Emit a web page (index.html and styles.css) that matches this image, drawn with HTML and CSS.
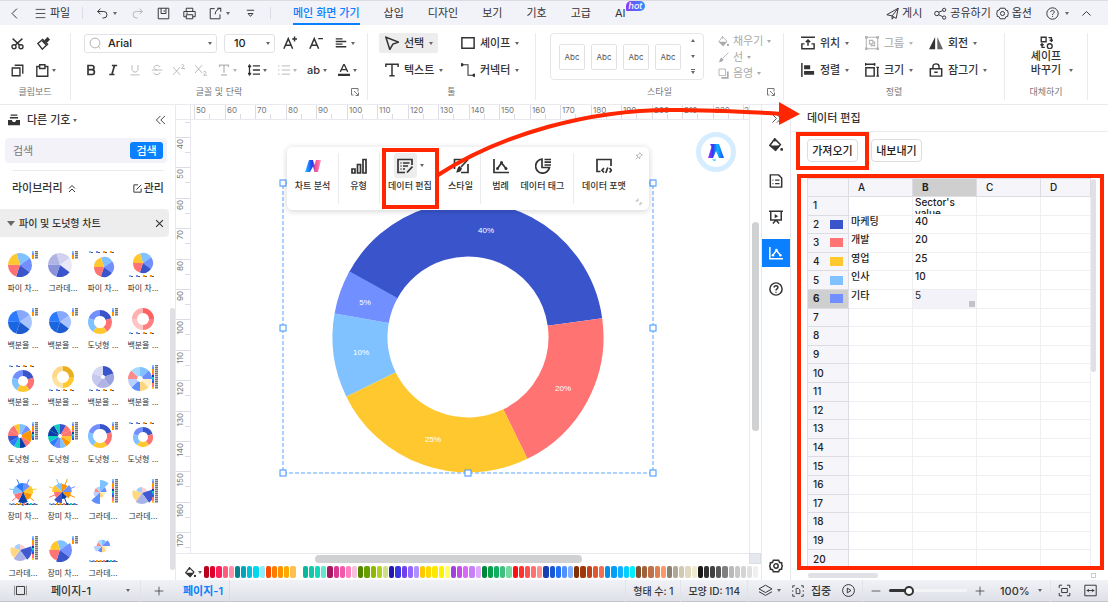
FILE: index.html
```html
<!DOCTYPE html>
<html lang="ko">
<head>
<meta charset="utf-8">
<title>데이터 편집</title>
<link rel="stylesheet" href="styles.css">
</head>
<body>
<svg class="sprite" aria-hidden="true">
  <symbol id="back" viewBox="0 0 16 16"><path d="M11 2 5 8l6 6"/></symbol>
  <symbol id="menu" viewBox="0 0 16 16"><path d="M1 2h14M1 8h14M1 14h14"/></symbol>
  <symbol id="undo" viewBox="0 0 16 16"><path d="M5.500 2 2 5.500 5.500 9M2 5.500h7.500a4 4 0 0 1 0 8H8"/></symbol>
  <symbol id="redo" viewBox="0 0 16 16"><path d="M10.500 2 14 5.500 10.500 9M14 5.500H6.500a4 4 0 0 0 0 8H8"/></symbol>
  <symbol id="save" viewBox="0 0 16 16"><path d="M1.500 1.500h13v13h-13zM5 1.500V8h6V1.500M8.800 4v2"/></symbol>
  <symbol id="print" viewBox="0 0 16 16"><path d="M4 5V1.500h8V5M4 12H1V5.500h14V12H12M4 9.500h8v5H4zM4 7.500h2"/></symbol>
  <symbol id="export" viewBox="0 0 16 16"><path d="M7 2H1.500v12.500h12V9M10 1.500h4.500V6M14.500 1.500c-4 1-6.500 3-7 7.500"/></symbol>
  <symbol id="more" viewBox="0 0 16 16"><path d="M3.500 4h9M5 8l3 3.500L11 8z"/></symbol>
  <symbol id="send" viewBox="0 0 16 16"><path d="M1 9.500 15 1.500 12.500 14 7.500 11zM7.500 11v4l2-2.700M7.500 11 15 1.500"/></symbol>
  <symbol id="share" viewBox="0 0 16 16"><circle cx="3.500" cy="8" r="2.700"/><circle cx="12.500" cy="3.500" r="2"/><circle cx="12.500" cy="13" r="2"/><path d="M5.800 6.500 10.500 4.500M5.800 9.500l5 2.500"/></symbol>
  <symbol id="gear" viewBox="0 0 16 16"><path d="M5 1.500h6l1 2.300 2.500.7v1.500l.7 2-.7 2v1.500l-2.500.7-1 2.300H5l-1-2.300-2.500-.7V10l-.7-2 .7-2V4.500L4 3.800z"/><circle cx="8" cy="8" r="2.500"/></symbol>
  <symbol id="help" viewBox="0 0 16 16"><circle cx="8" cy="8" r="7"/><path d="M5.800 6.300C5.800 3.500 10.200 3.600 10.200 6.200 10.200 7.800 8 7.800 8 9.700M8 11v1.200"/></symbol>
  <symbol id="up" viewBox="0 0 16 16"><path d="m3 10.500 5-5 5 5"/></symbol>
  <symbol id="cut" viewBox="0 0 16 16"><circle cx="3.700" cy="12" r="2.500"/><circle cx="12.300" cy="12" r="2.500"/><path d="M5.300 10 14 2M10.700 10 2 2"/></symbol>
  <symbol id="brush" viewBox="0 0 16 16"><path class="f" d="m9 4 4-4 3 3-4 4.500z"/><path d="m7 3 6 6-6.500 6L1 8zM6.500 5l5 5"/></symbol>
  <symbol id="copy" viewBox="0 0 16 16"><path d="M1.500 5h9.500v9.500H1.500zM4.500 1.500h10V12"/></symbol>
  <symbol id="paste" viewBox="0 0 16 16"><path d="M4 3H1v12h13.500V3H11M4.500 1h6.500v4.500H4.500z"/></symbol>
  <symbol id="lens" viewBox="0 0 16 16"><circle cx="8" cy="8" r="6.500"/><path d="m12 12 3 3.500"/></symbol>
  <symbol id="bigger" viewBox="0 0 16 16"><path d="M1 14.500 6 3l5 11.500M2.800 10.500h6.600M10.500 3.500h5.500M13.200.7v5.600"/></symbol>
  <symbol id="smaller" viewBox="0 0 16 16"><path d="M1 14.500 6 3l5 11.500M2.800 10.500h6.600M10.500 3H16"/></symbol>
  <symbol id="align" viewBox="0 0 16 16"><path d="M1 2.500h9M1 6h14M1 9.500h9M1 13h14"/></symbol>
  <symbol id="bold" viewBox="0 0 16 16"><path d="M4 2h5c4 0 4 5.500 0 5.500H4zM4 7.500h5.500c4 0 4 6.500 0 6.500H4z"/></symbol>
  <symbol id="italic" viewBox="0 0 16 16"><path d="M6.500 2h7M3 14h7M10 2 6.500 14"/></symbol>
  <symbol id="under" viewBox="0 0 16 16"><path d="M4 1.500V7c0 5 8 5 8 0V1.500M2 14.500h12"/></symbol>
  <symbol id="strike" viewBox="0 0 16 16"><path d="M12 4c-1-3-8-3-8 .5 0 2 2 3 4 3.500M1 8h14M12 11c0 4-7.500 4-8.500.5"/></symbol>
  <symbol id="sup" viewBox="0 0 16 16"><path d="m0 4 9.500 10.500M9.500 4 0 14.500M11.500 2c0-2 3.500-1.500 3 .5L11.500 6H16"/></symbol>
  <symbol id="sub" viewBox="0 0 16 16"><path d="m0 1.500 9.500 10.500M9.500 1.500 0 12M11.500 11c0-2 3.500-1.500 3 .5l-3 3.500H16"/></symbol>
  <symbol id="tee" viewBox="0 0 16 16"><path d="M2 4V1.500h12V4M8 1.500v10M4 14.500h8"/></symbol>
  <symbol id="spacing" viewBox="0 0 16 16"><path d="M2 2v12M0 4l2-2.500L4 4M0 12l2 2.500L4 12M6.500 2.500H17M6.500 8H17M6.500 13.500H17"/></symbol>
  <symbol id="list" viewBox="0 0 16 16"><path d="M0 2.500h2M5 2.500h11M0 8h2M5 8h11M0 13.500h2M5 13.500h11"/></symbol>
  <symbol id="fontcolor" viewBox="0 0 16 16"><path d="M3 10.500 8 0l5 10.500M4.800 7.500h6.400"/><path class="f" d="M0 13h16v3.500H0z"/></symbol>
  <symbol id="launch" viewBox="0 0 16 16"><path d="M5 14H1V1h13v6M6 6l8 8M15 9v6H9"/></symbol>
  <symbol id="pointer" viewBox="0 0 16 16"><path d="m1 1.500 14.500 5.500-6.500 2.200L5.500 15.500z"/></symbol>
  <symbol id="text" viewBox="0 0 16 16"><path d="M1 4.500V1.500h14v3M8 1.500v13M5 14.500h6"/></symbol>
  <symbol id="rect" viewBox="0 0 16 16"><path d="M1 2h14v12H1z"/></symbol>
  <symbol id="connector" viewBox="0 0 16 16"><path d="M1 2h7v12h6"/><circle class="f" cx="1" cy="2" r="1.900"/><circle class="f" cx="15" cy="14" r="1.900"/></symbol>
  <symbol id="bucket" viewBox="0 0 16 16"><path d="m6.500 1 6.500 6.500-5.500 6.500L1 8.500zM6.500 0v4"/><path class="f" d="M1.500 8.500h11.500l-5.500 6.500z"/><circle class="f" cx="14.500" cy="13" r="1.700"/></symbol>
  <symbol id="pen" viewBox="0 0 16 16"><path d="M15 1 7 9"/><path class="f" d="m5 8 3 3c-1 3-4 4-7 4 2-2 1-5 4-7z"/></symbol>
  <symbol id="shadow" viewBox="0 0 16 16"><path class="f" d="M5 13h8V5h2.500v10.500H5z"/><path d="M1.500 1.500H11V11H1.500z"/></symbol>
  <symbol id="position" viewBox="0 0 16 16"><path d="M0 1.500h16M8 11V5M5.500 7 8 4.500 10.500 7M4 9H1v5.500h14V9H12"/></symbol>
  <symbol id="alignleft" viewBox="0 0 16 16"><path d="M1 0v16"/><path class="f" d="M3.500 2.500h7v4.500h-7zM3.500 9H15v4.500H3.500z"/></symbol>
  <symbol id="group" viewBox="0 0 16 16"><path d="M1.500 1.500h13v13h-13z"/><path d="M5 5h4v4H5zM7 9v2h4V7H9"/><path class="f" d="M0 0h3v3H0zM13 0h3v3h-3zM0 13h3v3H0zM13 13h3v3h-3z"/></symbol>
  <symbol id="size" viewBox="0 0 16 16"><path d="M1 5.500h9.500v9.500H1zM0 1.500h11.500M.5 0v3M11 0v3M14.500 5v10M13 5h3M13 15h3"/></symbol>
  <symbol id="flip" viewBox="0 0 16 16"><path class="f" d="M7 1v14H0z"/><path class="f" opacity=".75" d="M9.500 1 16 15H9.500z"/></symbol>
  <symbol id="lock" viewBox="0 0 16 16"><path d="M1.500 6.500h13V15h-13zM4.500 6V4c0-4 7-4 7 0v2M6 10.500h4"/></symbol>
  <symbol id="swap" viewBox="0 0 16 16"><path d="M1.500 1.500h6V7h-6zM10.500 2h3.500v4M12 4.500 14 6.500 16 4.500M9 12.500a3 3 0 1 0 6 0 3 3 0 1 0-6 0M6 14H2.500v-4M.5 11.500l2-2 2 2"/></symbol>
  <symbol id="drawer" viewBox="0 0 16 16"><path d="M3.500 1.500h9M2.500 5h11" /><path class="f" d="M0 8h5l1.500 2.500h3L11 8h5v7H0z"/></symbol>
  <symbol id="dleft" viewBox="0 0 16 16"><path d="M8 2 2 8l6 6M14.500 2l-6 6 6 6"/></symbol>
  <symbol id="dright" viewBox="0 0 16 16"><path d="m2 2 6 6-6 6M8.500 2l6 6-6 6"/></symbol>
  <symbol id="dup" viewBox="0 0 16 16"><path d="m2 8 6-6 6 6M2 15l6-6 6 6"/></symbol>
  <symbol id="edit" viewBox="0 0 16 16"><path d="M9 1.500H1.500v13h13V8M6 10l8.500-8.500"/></symbol>
  <symbol id="close" viewBox="0 0 16 16"><path d="m2 2 12 12M14 2 2 14"/></symbol>
  <symbol id="bars" viewBox="0 0 16 16"><path d="M1 11h3v4H1zM6.500 6.500h3V15h-3zM12 1.500h3V15h-3z"/></symbol>
  <symbol id="dataedit" viewBox="0 0 16 16"><path d="M15 7V1.500H1v13h7M3.500 5h1M6 5h6.500M3.500 8h1M6 8h5M3.500 11h1M6 11h2M10 14.500l5.500-6"/></symbol>
  <symbol id="style" viewBox="0 0 16 16"><path d="M10 1.500H1.500V11M15 6v8.500H8M15 1.500 8 9"/><path class="f" d="m6.500 8 2.500 2.500c-1 3-3 4-6 4 1.500-2 1-5 3.500-6.500z"/></symbol>
  <symbol id="legend" viewBox="0 0 16 16"><path d="M1 1v13.500H16M4.500 10.500 8.500 5l4.500 5.500"/><circle class="f" cx="8.500" cy="4.500" r="1.500"/><circle class="f" cx="4.500" cy="10.500" r="1.500"/><circle class="f" cx="13" cy="10.500" r="1.500"/></symbol>
  <symbol id="tag" viewBox="0 0 16 16"><path d="M7 1.200a7 7 0 1 0 7.500 8.300H7zM9.500 1.500H16M9.500 4.200H16M9.500 7H16"/></symbol>
  <symbol id="format" viewBox="0 0 16 16"><path d="M4.500 13.500H1v-12h14V8M8 10l-2 2.200 2 2.300M13.500 10l2 2.200-2 2.300M11.800 9.500 9.800 15"/></symbol>
  <symbol id="pin" viewBox="0 0 16 16"><path d="m9.500 1.500 5 5-2 .5-3 3 0 3.500-7-7 3.500 0 3-3zM5.500 10.500 1.500 14.500"/></symbol>
  <symbol id="shrink" viewBox="0 0 16 16"><path d="M6 1v5H1M10 15v-5h5"/></symbol>
  <symbol id="doc" viewBox="0 0 16 16"><path d="M1.500 1H11l3.500 3.500V15h-13zM4 7h1M7 7h5M4 11h1M7 11h5"/></symbol>
  <symbol id="present" viewBox="0 0 16 16"><path d="M0 1.500h16M2 1.500v10h12v-10M4.500 15.500l3.500-4 3.500 4"/><path class="f" d="M6.500 4.500 10.500 7l-4 2.500z"/></symbol>
  <symbol id="pages" viewBox="0 0 16 16"><path d="M0 2v12M16 2v12M3 3h10v10H3z"/></symbol>
  <symbol id="plus" viewBox="0 0 16 16"><path d="M8 1v14M1 8h14"/></symbol>
  <symbol id="minus" viewBox="0 0 16 16"><path d="M1 8h14"/></symbol>
  <symbol id="layers" viewBox="0 0 16 16"><path d="m8 1.500 8 4.500-8 4.500L0 6zM0 9.500 8 14l8-4.500"/></symbol>
  <symbol id="focus" viewBox="0 0 16 16"><path d="M4 1H1v3M12 1h3v3M4 15H1v-3M12 15h3v-3M1 7v2M15 7v2M5.500 4.500h3l2 2v5h-5z"/></symbol>
  <symbol id="play" viewBox="0 0 16 16"><circle cx="8" cy="8" r="7.300"/><path d="M6.500 5v6L11 8z"/></symbol>
  <symbol id="fit" viewBox="0 0 16 16"><path d="M5 1.500H1.500V5M11 1.500h3.500V5M5 14.500H1.500V11M11 14.500h3.500V11M4.500 5.500h7v5h-7z"/></symbol>
  <symbol id="fitwidth" viewBox="0 0 16 16"><path d="M1 1.500h14v13H1zM3.500 8h9M6 6 4 8l2 2M10 6l2 2-2 2"/></symbol>
</svg>

<header class="topbar">
  <button class="tb" aria-label="뒤로"><svg class="i"><use href="#back"/></svg></button>
  <button class="file"><svg class="i"><use href="#menu"/></svg>파일</button>
  <span class="sep"></span>
  <button class="tb wide" aria-label="실행 취소"><svg class="i"><use href="#undo"/></svg><b class="car"></b></button>
  <button class="tb off" aria-label="다시 실행"><svg class="i"><use href="#redo"/></svg></button>
  <button class="tb" aria-label="저장"><svg class="i"><use href="#save"/></svg></button>
  <button class="tb" aria-label="인쇄"><svg class="i"><use href="#print"/></svg></button>
  <button class="tb wide" aria-label="내보내기"><svg class="i"><use href="#export"/></svg><b class="car"></b></button>
  <button class="tb" aria-label="더 보기"><svg class="i"><use href="#more"/></svg></button>
  <span class="sep"></span>
  <nav class="tabs">
    <a href="#home" class="on">메인 화면 가기</a><a href="#insert">삽입</a><a href="#design">디자인</a><a href="#view">보기</a><a href="#symbol">기호</a><a href="#adv">고급</a><a href="#ai">AI<span class="hot">hot</span></a>
  </nav>
  <div class="actions">
    <button><svg class="i"><use href="#send"/></svg>게시</button>
    <button class="sh"><svg class="i"><use href="#share"/></svg>공유하기</button>
    <button><svg class="i"><use href="#gear"/></svg>옵션</button>
    <button class="q" aria-label="도움말"><svg class="i"><use href="#help"/></svg><b class="car"></b></button>
    <button aria-label="접기"><svg class="i"><use href="#up"/></svg></button>
  </div>
</header>

<section class="ribbon">
  <div class="grp clip">
    <div class="rows">
      <div class="row"><button class="ic" aria-label="자르기"><svg class="i k"><use href="#cut"/></svg></button><button class="ic" aria-label="서식 복사"><svg class="i k"><use href="#brush"/></svg></button></div>
      <div class="row"><button class="ic" aria-label="복사"><svg class="i k"><use href="#copy"/></svg></button><button class="ic pst" aria-label="붙여넣기"><svg class="i k"><use href="#paste"/></svg><b class="car"></b></button></div>
    </div>
    <div class="lab">클립보드</div>
  </div>
  <div class="grp font">
    <div class="rows">
      <div class="row fields">
        <label class="box name"><svg class="i"><use href="#lens"/></svg><input value="Arial" aria-label="글꼴"><b class="car"></b></label>
        <label class="box num"><input value="10" aria-label="글꼴 크기"><b class="car"></b></label>
        <div class="row"><button class="ic" aria-label="크게"><svg class="i k"><use href="#bigger"/></svg></button><button class="ic" aria-label="작게"><svg class="i k"><use href="#smaller"/></svg></button><button class="ic m" aria-label="맞춤"><svg class="i k"><use href="#align"/></svg><b class="car"></b></button></div>
      </div>
      <div class="row marks">
        <button class="ic" aria-label="굵게"><svg class="i kk"><use href="#bold"/></svg></button><button class="ic" aria-label="기울임"><svg class="i kk"><use href="#italic"/></svg></button><button class="ic off" aria-label="밑줄"><svg class="i"><use href="#under"/></svg></button><button class="ic off" aria-label="취소선"><svg class="i"><use href="#strike"/></svg></button><button class="ic off" aria-label="위 첨자"><svg class="i"><use href="#sup"/></svg></button><button class="ic off" aria-label="아래 첨자"><svg class="i"><use href="#sub"/></svg></button><button class="ic m off" aria-label="문자 효과"><svg class="i k"><use href="#tee"/></svg><b class="car"></b></button><button class="ic m" aria-label="줄 간격"><svg class="i k"><use href="#spacing"/></svg><b class="car"></b></button><button class="ic m off" aria-label="목록"><svg class="i"><use href="#list"/></svg><b class="car"></b></button><button class="ic m">ab<b class="car"></b></button><button class="ic m" aria-label="글꼴 색"><svg class="i k"><use href="#fontcolor"/></svg><b class="car"></b></button>
      </div>
    </div>
    <div class="lab">글꼴 및 단락<svg class="i launch"><use href="#launch"/></svg></div>
  </div>
  <div class="grp tools">
    <div class="cols">
      <button class="cmd sel"><svg class="i k"><use href="#pointer"/></svg>선택<b class="car"></b></button>
      <button class="cmd"><svg class="i k"><use href="#rect"/></svg>셰이프<b class="car"></b></button>
      <button class="cmd"><svg class="i k"><use href="#text"/></svg>텍스트<b class="car"></b></button>
      <button class="cmd"><svg class="i"><use href="#connector"/></svg>커넥터<b class="car"></b></button>
    </div>
    <div class="lab">툴</div>
  </div>
  <div class="grp styles">
    <div class="stylebody">
      <div class="gallery"><button>Abc</button><button>Abc</button><button>Abc</button><button>Abc</button><div class="spin"><b class="car upw"></b><b class="car"></b><b class="car line"></b></div></div>
      <div class="fx">
        <button><svg class="i"><use href="#bucket"/></svg>채우기<b class="car"></b></button>
        <button><svg class="i"><use href="#pen"/></svg>선<b class="car"></b></button>
        <button><svg class="i"><use href="#shadow"/></svg>음영<b class="car"></b></button>
      </div>
    </div>
    <div class="lab">스타일<svg class="i launch"><use href="#launch"/></svg></div>
  </div>
  <div class="grp arrange">
    <div class="cols">
      <button class="cmd"><svg class="i k"><use href="#position"/></svg>위치<b class="car"></b></button>
      <button class="cmd off"><svg class="i"><use href="#group"/></svg>그룹<b class="car"></b></button>
      <button class="cmd"><svg class="i k"><use href="#flip"/></svg>회전<b class="car"></b></button>
      <button class="cmd"><svg class="i k"><use href="#alignleft"/></svg>정렬<b class="car"></b></button>
      <button class="cmd"><svg class="i k"><use href="#size"/></svg>크기<b class="car"></b></button>
      <button class="cmd"><svg class="i k"><use href="#lock"/></svg>잠그기<b class="car"></b></button>
    </div>
    <div class="lab">정렬</div>
  </div>
  <div class="grp replace">
    <button class="big"><svg class="i k"><use href="#swap"/></svg><span>셰이프</span><span class="drop">바꾸기<b class="car"></b></span></button>
    <div class="lab">대체하기</div>
  </div>
</section>

<main class="work">
  <aside class="library">
    <div class="lhead"><svg class="i k"><use href="#drawer"/></svg>다른 기호<b class="car"></b><button aria-label="접기"><svg class="i"><use href="#dleft"/></svg></button></div>
    <form class="search"><input placeholder="검색" aria-label="기호 검색"><button type="button">검색</button></form>
    <div class="lrow"><span>라이브러리</span><svg class="i k"><use href="#dup"/></svg><button><svg class="i"><use href="#edit"/></svg>관리</button></div>
    <div class="lsec"><b class="car"></b><span>파이 및 도넛형 차트</span><button aria-label="닫기"><svg class="i"><use href="#close"/></svg></button></div>
    <div class="lbody"><div class="thumbs" id="thumbs"></div><div class="lscroll"></div></div>
  </aside>

  <section class="editor">
    <div class="corner"></div>
    <svg class="hruler" id="hruler"></svg>
    <div class="rulerend"></div>
    <svg class="vruler" id="vruler"></svg>
    <div class="canvas">
      <svg class="chart" viewBox="277 177 382 302" role="img" aria-label="도넛형 차트">
        <g class="ring">
          <circle class="c1" cx="468" cy="337" r="108" pathLength="360"/>
          <circle class="c2" cx="468" cy="337" r="108" pathLength="360"/>
          <circle class="c3" cx="468" cy="337" r="108" pathLength="360"/>
          <circle class="c4" cx="468" cy="337" r="108" pathLength="360"/>
          <circle class="c5" cx="468" cy="337" r="108" pathLength="360"/>
        </g>
        <g class="pct"><text x="486" y="233">40%</text><text x="563" y="391">20%</text><text x="433" y="442">25%</text><text x="361" y="355">10%</text><text x="365" y="305">5%</text></g>
        <path class="frame" d="M283 183H653V473H283z"/>
        <g class="knobs"><rect x="280" y="180" width="6" height="6"/><rect x="650" y="180" width="6" height="6"/><rect x="280" y="325" width="6" height="6"/><rect x="650" y="325" width="6" height="6"/><rect x="280" y="470" width="6" height="6"/><rect x="465" y="470" width="6" height="6"/><rect x="650" y="470" width="6" height="6"/></g>
      </svg>
      <div class="float">
        <button><svg class="logo" viewBox="0 0 16 14"><defs><linearGradient id="g1"><stop offset="0" stop-color="#1ccfff"/><stop offset=".45" stop-color="#2437f5"/><stop offset=".65" stop-color="#ff4b8b"/><stop offset="1" stop-color="#ff8fc0"/></linearGradient></defs><path fill="url(#g1)" d="M4 1h4l1.500 5L11 1h5l-3 12H9.500L8 7.500 5 13H0z"/></svg><span>차트 분석</span></button>
        <i class="fsep"></i>
        <button><svg class="i k"><use href="#bars"/></svg><span>유형</span></button>
        <i class="fsep"></i>
        <button class="hi"><em><svg class="i k"><use href="#dataedit"/></svg></em><b class="car"></b><span>데이터 편집</span></button>
        <button><svg class="i k"><use href="#style"/></svg><span>스타일</span></button>
        <i class="fsep"></i>
        <button><svg class="i k"><use href="#legend"/></svg><span>범례</span></button>
        <button class="tagb"><svg class="i k"><use href="#tag"/></svg><span>데이터 태그</span></button>
        <i class="fsep"></i>
        <button><svg class="i k"><use href="#format"/></svg><span>데이터 포맷</span></button>
        <div class="fend"><svg class="i"><use href="#pin"/></svg><svg class="i"><use href="#shrink"/></svg></div>
      </div>
      <button class="bubble" aria-label="AI 도우미"><svg viewBox="0 0 20 20"><defs><linearGradient id="g2"><stop offset="0" stop-color="#c12dff"/><stop offset=".3" stop-color="#2c3cf5"/><stop offset=".6" stop-color="#08b5ff"/><stop offset="1" stop-color="#2447ff"/></linearGradient></defs><path fill="url(#g2)" d="M4 2h9l5 14h-5L10 9 7 16H2L5.500 5z"/><path fill="#08c5ff" d="M6 17q3 1 4 0 0 2-2 2z"/></svg></button>
    </div>
    <div class="vscroll"><i></i></div>
    <div class="hscroll"><i></i></div>
    <div class="nub"></div>
    <div class="palette"><svg class="i k"><use href="#bucket"/></svg><b class="car"></b><div class="chips" id="chips"></div></div>
  </section>

  <nav class="rail">
    <button class="fold" aria-label="접기"><svg class="i"><use href="#dright"/></svg></button>
    <button aria-label="채우기"><svg class="i k"><use href="#bucket"/></svg></button>
    <button aria-label="페이지"><svg class="i k"><use href="#doc"/></svg></button>
    <button aria-label="프레젠테이션"><svg class="i k"><use href="#present"/></svg></button>
    <button class="on" aria-label="차트"><svg class="i k"><use href="#legend"/></svg></button>
    <button aria-label="도움말"><svg class="i k"><use href="#help"/></svg></button>
    <button class="last" aria-label="설정"><svg class="i k"><use href="#gear"/></svg></button>
  </nav>

  <section class="data">
    <h2>데이터 편집</h2>
    <div class="io"><button>가져오기</button><button>내보내기</button></div>
    <div class="sheetbox">
      <table class="sheet">
        <thead><tr><th class="rh"></th><th>A</th><th class="cur">B</th><th>C</th><th class="d">D</th></tr></thead>
        <tbody id="sheet"></tbody>
      </table>
      <div class="sscroll"></div>
    </div>
    <div class="sfoot"><i></i><u></u></div>
  </section>
</main>

<footer class="status">
  <button class="pg" aria-label="페이지 보기"><svg class="i"><use href="#pages"/></svg></button>
  <button class="pagesel">페이지-1<b class="car"></b></button>
  <button class="add" aria-label="페이지 추가"><svg class="i"><use href="#plus"/></svg></button>
  <a class="cur" href="#page1">페이지-1</a>
  <span class="info">형태 수: 1</span>
  <span class="info">모양 ID: 114</span>
  <button class="lay" aria-label="레이어"><svg class="i"><use href="#layers"/></svg><b class="car"></b></button>
  <button class="foc"><svg class="i"><use href="#focus"/></svg>집중</button>
  <button class="ply" aria-label="재생"><svg class="i"><use href="#play"/></svg></button>
  <button class="zo" aria-label="축소"><svg class="i"><use href="#minus"/></svg></button>
  <input type="range" min="0" max="100" value="22" aria-label="확대/축소">
  <button class="zo" aria-label="확대"><svg class="i"><use href="#plus"/></svg></button>
  <button class="pc">100%<b class="car"></b></button>
  <button class="ft" aria-label="화면 맞춤"><svg class="i"><use href="#fit"/></svg></button>
  <button class="ft" aria-label="너비 맞춤"><svg class="i"><use href="#fitwidth"/></svg></button>
</footer>

<svg class="notes" aria-hidden="true">
  <path d="M384 150h53v57h-53zM798 134h69v34h-69zM799 176h303v392H799z"/>
  <path d="M438 175C500 135 590 108 680 110Q740 111 782 114"/>
  <path class="tip" d="m779 102 21 12-21 11z"/>
</svg>
<script src="app.js"></script>
</body>
</html>
```
FILE: styles.css
```css
* { box-sizing: border-box; }
body {
  margin: 0; height: 100vh; display: flex; flex-direction: column; overflow: hidden;
  font: 11px/16px Inter, "Noto Sans CJK KR", sans-serif; color: #333; background: #fff;
  position: relative;
}
button, input { font: inherit; color: inherit; border: 0; background: none; padding: 0; margin: 0; }
button { display: flex; align-items: center; white-space: nowrap; }
a { color: inherit; text-decoration: none; }
.sprite { display: none; }
.i { width: 14px; height: 14px; flex: none; fill: none; stroke: currentColor; stroke-width: 1.2; overflow: visible; }
.k { stroke-width: 1.7; }
.kk { stroke-width: 2.2; }
.f { fill: currentColor; stroke: none; }
.off { color: #b4b4b4; }
.car { flex: none; width: 0; height: 0; border: 2px solid transparent; border-top: 3px solid #666; border-bottom: 0; }
.off .car { border-top-color: #b4b4b4; }
.upw { transform: rotate(180deg); }

/* top bar */
.topbar { display: flex; align-items: center; height: 25px; flex: none; background: #f2f2f9; border-top: 1px solid #dcdce2; }
.tb { width: 26px; justify-content: center; }
.tb .i { width: 13px; height: 13px; }
.tb.wide { width: 35px; justify-content: flex-start; padding-left: 7px; gap: 4px; }
.topbar > .tb:first-child { width: 28px; }
.file { gap: 4px; padding-left: 7px; width: 54px; }
.file .i { width: 11px; height: 11px; }
.sep { width: 1px; height: 12px; background: #dcdce4; margin-right: 6px; }
.tb + .sep { margin: 0 22px 0 7px; }
.tabs { display: flex; gap: 24px; flex: 1; height: 24px; align-items: stretch; }
.tabs a { position: relative; line-height: 25px; height: 24px; white-space: nowrap; }
.tabs .on { color: #0a80ff; font-weight: 500; border-bottom: 2px solid #0a80ff; }
.hot { position: absolute; left: 11px; top: 0; width: 19px; height: 10px; border-radius: 5px 5px 5px 1px; background: linear-gradient(90deg, #8a3cf5, #2a8cff); color: #fff; font: italic 500 9px/10px Inter, sans-serif; text-align: center; }
.actions { display: flex; align-items: center; gap: 10px; padding-right: 15px; }
.actions button { gap: 3px; }
.actions .i { width: 13px; height: 13px; }
.actions .sh { margin: 0 -5px 0 2px; }
.actions .q { margin: 0 1px 0 4px; gap: 6px; }

/* ribbon */
.ribbon { display: flex; flex: none; padding: 8px 0 4px; border-bottom: 1px solid #ebebef; }
.grp { display: flex; flex-direction: column; border-right: 1px solid #ebebef; flex: none; }
.rows { display: grid; grid-template-rows: 20px 20px; gap: 7px; }
.row { display: flex; align-items: center; }
.lab { position: relative; margin-top: 4px; height: 16px; text-align: center; font-size: 9px; color: #777; }
.launch { position: absolute; right: 8px; top: 4px; width: 8px; height: 8px; stroke-width: 2; }
.clip { width: 71px; }
.clip .row { padding-left: 4px; }
.clip .ic { width: 26px; gap: 3px; }
.clip .pst { width: 32px; }
.ic { justify-content: center; width: 22px; gap: 3px; }
.ic .i { width: 12px; height: 12px; }
.clip .i { width: 13px; height: 13px; }
.font { width: 297px; }
.fields { padding-left: 13px; gap: 7px; }
.fields .row { margin-left: -5px; }
.fields .ic { width: 26px; }
.fields .ic .i { width: 14px; height: 14px; }
.fields .m .i { height: 12px; }
.ic.m, .fields .ic.m { width: 30px; }
.box { display: flex; align-items: center; height: 19px; border: 1px solid #e2e2e6; border-radius: 3px; padding: 0 4px; gap: 7px; color: #222; font-weight: 500; }
.box input { min-width: 0; flex: 1; outline: 0; }
.box .i { width: 12px; height: 12px; color: #aaa; }
.box.name { width: 133px; }
.box.num { width: 51px; padding-left: 9px; }
.marks { padding-left: 9px; }
.marks .m { font-weight: 500; }
.tools { width: 168px; }
.tools .cols { grid-template-columns: 76px 76px; padding-left: 11px; }
.cols { display: grid; grid-template-rows: 20px 20px; gap: 7px 0; }
.cmd { padding: 0 5px 0 6px; gap: 5px; justify-self: start; border-radius: 2px; font-weight: 500; }
.cmd.sel { background: #ededee; }
.styles { width: 248px; }
.stylebody { display: flex; height: 47px; padding-left: 14px; gap: 14px; }
.gallery { display: flex; align-items: center; gap: 6px; width: 154px; border: 1px solid #e6e6ea; border-radius: 4px; padding-left: 8px; }
.gallery button { width: 26px; height: 26px; border: 1px solid #e2e2e4; border-radius: 2px; justify-content: center; font-size: 8px; color: #555; }
.spin { display: flex; flex-direction: column; gap: 13px; margin-left: 4px; }
.spin .line { position: relative; }
.spin .line::before { content: ""; position: absolute; left: -2px; top: -5px; width: 4px; height: 1px; background: #666; }
.fx { display: grid; grid-template-rows: repeat(3, 16px); color: #aaa; }
.fx button { gap: 4px; }
.fx .i { width: 11px; height: 11px; }
.fx .car { border-top-color: #aaa; }
.arrange { width: 221px; }
.arrange .cols { grid-template-columns: 64px 64px 80px; padding-left: 12px; }
.arrange .cmd { padding: 0 5px; }
.replace { width: 83px; }
.big { flex-direction: column; height: 47px; line-height: 14px; font-weight: 500; padding-top: 3px; }
.big .i { width: 13px; height: 13px; }
.big .drop { position: relative; }
.big .car { position: absolute; right: -12px; top: 6px; }

/* body */
.work { flex: 1; display: flex; min-height: 0; }
.library { width: 176px; flex: none; display: flex; flex-direction: column; border-right: 1px solid #e8e8ee; }
.lhead { display: flex; align-items: center; height: 30px; padding: 0 9px 0 8px; gap: 7px; font-weight: 500; }
.lhead .i { width: 12px; height: 12px; }
.lhead .car { margin-left: -4px; }
.lhead button, .lrow button, .lsec button { margin-left: auto; gap: 2px; }
.lhead button .i { stroke-width: 1.3; width: 11px; }
.search { display: flex; align-items: center; height: 25px; margin: 3px 8px 0 5px; padding: 0 4px 0 8px; border-radius: 4px; background: #f2f2f8; }
.search input { flex: 1; min-width: 0; outline: 0; }
.search input::placeholder { color: #777; }
.search button { width: 33px; height: 17px; justify-content: center; border-radius: 3px; background: #0a80ff; color: #fff; font-weight: 500; }
.lrow { display: flex; align-items: center; height: 35px; margin: 7px 11px 0 12px; border-top: 1px solid #ebebef; gap: 5px; font-weight: 500; }
.lrow .i { width: 8px; height: 9px; stroke-width: 2; }
.lrow button .i { width: 9px; height: 9px; stroke-width: 1.7; }
.lsec { display: flex; align-items: center; height: 28px; flex: none; margin: 4px 6px 0 0; padding: 0 5px 0 7px; gap: 4px; background: #ededee; border-radius: 0 4px 4px 0; font-size: 10px; font-weight: 500; }
.lsec .car { border-width: 5px 4px 0; }
.lsec .i { width: 9px; height: 9px; stroke-width: 2; }
.lbody { flex: 1; min-height: 0; overflow: hidden; display: flex; justify-content: space-between; }
.thumbs { display: grid; grid-template-columns: repeat(4, 40px); grid-auto-rows: 44px; gap: 13px 0; padding: 14px 0 0 3px; }
.thumbs figure { margin: 0; display: flex; flex-direction: column; align-items: center; gap: 2px; }
.thumbs svg { width: 30px; height: 28px; }
.thumbs figcaption { font-size: 8px; line-height: 14px; white-space: nowrap; }
.lscroll { width: 5px; height: 262px; margin-top: 71px; border-radius: 3px; background: #dfdfe4; }

.editor { flex: 1; min-width: 0; display: grid; grid-template: 15px 1fr 11px 16px / 15px 1fr 12px; border-right: 1px solid #e8e8ee; }
.hruler { width: 100%; height: 15px; border-bottom: 1px solid #e8e8ee; overflow: hidden; }
.corner { border-bottom: 1px solid #e8e8ee; border-right: 1px solid #e8e8ee; }
.rulerend { border-left: 1px solid #e8e8ee; }
.vruler { width: 15px; height: 100%; border-right: 1px solid #e8e8ee; }
.hruler line, .vruler line { stroke: #dcdce4; }
.hruler text, .vruler text { font-size: 8px; fill: #777; }
.canvas { position: relative; overflow: hidden; min-height: 0; }
.chart { position: absolute; left: 86px; top: 57px; width: 382px; height: 302px; }
.ring circle { fill: none; stroke-width: 55; transform-origin: 468px 337px; }
.c1 { stroke: #3a54cc; stroke-dasharray: 144 216; transform: rotate(208deg); }
.c2 { stroke: #ff7373; stroke-dasharray: 72 288; transform: rotate(352deg); }
.c3 { stroke: #ffc82e; stroke-dasharray: 90 270; transform: rotate(64deg); }
.c4 { stroke: #7fc2ff; stroke-dasharray: 36 324; transform: rotate(154deg); }
.c5 { stroke: #728fff; stroke-dasharray: 19 341; transform: rotate(190deg); }
.pct text { font: 8px "Liberation Sans", sans-serif; fill: #fff; text-anchor: middle; }
.frame { fill: none; stroke: #5aa5ff; stroke-dasharray: 4 2; }
.knobs rect { fill: #fff; stroke: #3a94ff; }
.float { position: absolute; left: 96px; top: 27px; width: 362px; height: 63px; display: flex; align-items: center; background: #fff; border-radius: 5px; box-shadow: 0 1px 6px rgba(0, 0, 0, .18); font-size: 9px; font-weight: 500; }
.float button { flex-direction: column; width: 41px; height: 51px; position: relative; padding-top: 5px; }
.float button > span { flex: none; margin: 6px -8px 0; line-height: 11px; }
.float .i, .float .logo { width: 16px; height: 16px; }
.float button:first-child { width: 51px; }
.float .fsep { width: 1px; height: 51px; margin-right: -1px; background: #ebebef; flex: none; }
.float .hi { width: 62px; padding-top: 0; }
.hi em { display: grid; place-items: center; width: 23px; height: 25px; border-radius: 3px; background: #ededee; margin-right: 10px; }
.float .hi > span { margin-top: 2px; }
.hi .car { position: absolute; left: 41px; top: 11px; }
.float .hi + button { width: 39px; }
.float .tagb { width: 43px; margin-right: 9px; }
.float .tagb + .fsep + button { width: 62px; }
.fend { display: flex; flex-direction: column; justify-content: space-between; height: 54px; color: #888; }
.float .fend .i { width: 8px; height: 8px; }
.bubble { position: absolute; left: 505px; top: 12px; width: 40px; height: 40px; border: 5px solid #d6edff; border-radius: 50%; background: #fff; justify-content: center; }
.bubble svg { width: 20px; height: 20px; }
.vscroll { border-left: 1px solid #e8e8ee; padding: 102px 2px 0; }
.vscroll i { display: block; height: 209px; border-radius: 4px; background: #d0d1d3; }
.hscroll { grid-column: 1 / 3; border-top: 1px solid #e8e8ee; padding: 1px 0 0 139px; }
.hscroll i { display: block; width: 267px; height: 8px; border-radius: 4px; background: #d0d1d3; }
.nub { background: #e6e8ef; border: 1px solid #dcdce4; }
.palette { grid-column: 1 / 4; display: flex; align-items: center; padding: 0 3px 0 9px; gap: 2px; }
.palette .i { width: 11px; height: 11px; }
.chips { flex: 1; display: flex; gap: 1px; }
.chips span { flex: 1; height: 12px; border-radius: 2px; }

.rail { width: 29px; flex: none; display: flex; flex-direction: column; gap: 8px; border-right: 1px solid #e8e8ee; }
.rail button { height: 28px; justify-content: center; }
.rail .fold { height: 26px; margin-bottom: -8px; }
.rail .fold .i { width: 11px; height: 11px; }
.rail .on { background: #0a80ff; color: #fff; }
.rail .last { margin-top: auto; }

.data { width: 317px; flex: none; display: flex; flex-direction: column; }
.data h2 { margin: 0; font-size: 11px; font-weight: 500; line-height: 26px; padding-left: 16px; border-bottom: 1px solid #ebebef; }
.io { display: flex; gap: 13px; padding: 7px 16px 0; }
.io button { height: 23px; width: 51px; justify-content: center; border: 1px solid #dedee2; border-radius: 4px; font-weight: 500; color: #222; }
.sheetbox { flex: 1; min-height: 0; display: flex; margin: 16px 12px 0 16px; }
.sheet { flex: 1; border-collapse: collapse; table-layout: fixed; height: 100%; font-size: 10px; line-height: 11px; color: #222; }
.sheet th { font-weight: 500; text-align: left; background: #f5f5fa; border: 1px solid #dcdce2; padding: 0 0 0 9px; }
.sheet thead th { height: 18px; width: 64px; }
.sheet thead .rh { width: 41px; }
.sheet thead .d { width: auto; }
.sheet thead .cur, .sheet .cur { background: #cfcfcf; font-weight: 700; }
.sheet .rh { padding-left: 5px; }
.sheet .rh div { display: flex; justify-content: space-between; align-items: center; padding-right: 5px; }
.sheet .rh i { width: 13px; height: 9px; }
.sheet td { border: 1px solid #efeff2; padding: 0 0 0 2px; vertical-align: top; position: relative; font-weight: 500; }
.sheet td div { height: 17px; overflow: hidden; }
.sheet .act { background: #f2f2f8; font-weight: 400; }
.sheet .act::after { content: ""; position: absolute; right: 1px; bottom: 1px; width: 6px; height: 6px; background: #c4c4c8; }
.sscroll { width: 5px; height: 193px; margin-top: 1px; border-radius: 3px; background: #e0e0e6; }
.sfoot { display: flex; justify-content: space-between; align-items: center; height: 11px; padding: 1px 12px 0 17px; }
.sfoot i { width: 70px; height: 5px; border-radius: 3px; background: #e0e0e6; }
.sfoot u { width: 5px; height: 5px; border: 1px solid #ccc; }

/* status bar */
.status { display: flex; align-items: center; height: 22px; flex: none; background: linear-gradient(#f1f2f7, #dfe1e8); border-bottom: 1px solid #c4c5ca; font-weight: 500; }
.status > * { height: 22px; white-space: nowrap; }
.status .i { width: 13px; height: 13px; }
.pg { width: 40px; justify-content: center; }
.pagesel { width: 101px; padding: 0 10px 0 11px; justify-content: space-between; border-right: 1px solid #e2e3e9; }
.add { width: 35px; justify-content: center; }
.status .add .i, .status .zo .i { width: 10px; height: 10px; }
.status .cur { color: #0a80ff; line-height: 23px; padding: 0 6px 0 7px; border-right: 1px solid #dcdde3; margin-right: auto; font-weight: 600; }
.info { line-height: 23px; padding: 0 7px; border-left: 1px solid #e2e3e9; font-size: 10px; }
.lay { width: 40px; padding-left: 11px; gap: 5px; border-left: 1px solid #e2e3e9; }
.foc { width: 48px; padding-left: 5px; gap: 7px; }
.status .foc .i { width: 12px; height: 12px; }
.ply { width: 28px; justify-content: center; border-right: 1px solid #e2e3e9; }
.zo { width: 26px; justify-content: center; }
.status input { appearance: none; width: 78px; height: 3px; border-radius: 2px; background: linear-gradient(90deg, #333 22%, #f4f4f6 22%); }
.status input::-webkit-slider-thumb { appearance: none; width: 10px; height: 10px; border: 2px solid #333; border-radius: 50%; background: #fff; }
.pc { width: 58px; padding-left: 7px; gap: 8px; border-right: 1px solid #e2e3e9; }
.ft { width: 26px; justify-content: center; }
.ft:last-child { margin-right: 5px; }

.notes { position: absolute; inset: 0; width: 100%; height: 100%; pointer-events: none; }
.notes path { fill: none; stroke: #ff2600; stroke-width: 4; }
.notes .tip { fill: #ff2600; stroke: none; }
```
FILE: app.js
```javascript
const el = id => document.getElementById(id);

// Rulers
let h = '', v = '';
for (let k = 0; k < 19; k++) {
  const x = 3 + Math.round(30.5 * k);
  h += `<line x1="${x}.5" x2="${x}.5" y1="0" y2="15"/><line x1="${x + 15}.5" x2="${x + 15}.5" y1="9" y2="15"/><text x="${x + 2}" y="8">${k < 18 ? 50 + 10 * k : ''}</text>`;
}
h += '<text x="553" y="8">2</text>';
v += '<line x1="9" x2="15" y1="2.5" y2="2.5"/>';
for (let k = 0; k < 14; k++) {
  const y = 17 + Math.round(30.4 * k);
  v += `<line x1="0" x2="15" y1="${y}.5" y2="${y}.5"/><line x1="9" x2="15" y1="${y + 15}.5" y2="${y + 15}.5"/><text text-anchor="end" transform="translate(7 ${y + 2}) rotate(-90)">${40 + 10 * k}</text>`;
}
el('hruler').innerHTML = h;
el('vruler').innerHTML = v;

// Colour strip
const chips = 'b8001c e0002b ff2058 ff5a80 ff8fa8 06808c 00a6b8 00c0dc 00d8f0 90ecfa ff4800 ff7a00 ff9200 ffaa00 ffc050 fffdf6 08b89c 10c8a8 10d8b8 60e8d0 a81860 d83890 f058a8 ff80c0 f8c0dc 508800 68a000 90b800 b0d020 d0e088 2018b0 3838e0 7040f0 9068ff b090ff ffc800 ffd800 ffe800 fff000 ffff60 a040e0 c848e8 d868f8 c880f8 e0a8ff 008838 08a048 10b060 40c080 78d8a0 ff1010 ff3030 ff5050 ff7070 ff9090 1840b0 1858d8 2070f8 5090ff 80b0ff 803008 a03808 c04018 e05830 f07050 0090e8 00a0f8 10b0ff 00d0ff 00f0ff 805030 a06038 c07048 e08050 ff9868 888070 b0a890 d0c8b0 e0d8c0 f0ead0 181818 303030 404040 585858 808080 b8b8b8 c8c8c8 d4d4d4 e0e0e0 f0f0f0';
el('chips').innerHTML = chips.split(' ').map(c => `<span style="background:#${c}"></span>`).join('');

// Data sheet
const rows = [['', "Sector's value"], ['마케팅', '40', '#3a54cc'], ['개발', '20', '#ff7373'], ['영업', '25', '#ffc82e'], ['인사', '10', '#7fc2ff'], ['기타', '5', '#728fff']];
let body = '';
for (let r = 1; r <= 20; r++) {
  const d = rows[r - 1] || ['', ''];
  body += `<tr><th class="rh${r === 6 ? ' cur' : ''}"><div>${r}${d[2] ? `<i style="background:${d[2]}"></i>` : ''}</div></th><td><div>${d[0]}</div></td><td${r === 6 ? ' class="act"' : ''}><div>${d[1]}</div></td><td></td><td></td></tr>`;
}
el('sheet').innerHTML = body;

// Library thumbnails
const N = '#3a54cc', R = '#ff7373', Y = '#ffc82e', L = '#7fc2ff', V = '#728fff', O = '#ff9500', T = '#10d0c0', D = '#0a3fa8', B = '#2b7bff';
const wheel = [L, V, O, O, R, D, T, B, N, R, R, Y];
const sets = {
  mix: [L, V, N, R, Y],
  wheel,
  wheel2: [N, R, R, Y, O, L, V, B, T, D, D, T],
  rays: [V, Y, O, D, R, L, B],
  rays2: [O, V, O, D, N, R, Y, L],
  grey: ['#d0d2f0', '#e8e8f8', N, '#8a92d8', '#b0b4e4'],
  part: [N, '#9aa2e0', '#b0b4e4', '#c6c9ee', '#d6d8f4'],
  blue: ['#86a8ff', '#a8c4ff', '#1d5bd0', '#1a66e0', B],
  rose: ['#ff6060', '#ff8080', '#ffc4c4', '#ffb0b0'],
  gold: ['#e8b020', Y, '#ffe2a0', '#ffd888'],
  ring: [N, R, Y, L, V],
  pale: ['#7fc2ff', '#6b8fff', '#fff0c8', '#ffd680', '#5f8fff', '#b8d0ff', '#ff8a8a', '#a8d8ff'],
  fade: ['#ffd0d0', '#4058d0', '#a8b2e8', '#ffd880', '#9fd0ff']
};
function slice(cx, cy, r, q, a, b) {
  const p = (m, t) => `${(cx + m * Math.sin(t)).toFixed(1)} ${(cy - m * Math.cos(t)).toFixed(1)}`;
  const big = b - a > Math.PI ? 1 : 0;
  return `M${p(r, a)}A${r} ${r} 0 ${big} 1 ${p(r, b)}L${p(q, b)}A${q} ${q} 0 ${big} 0 ${p(q, a)}z`;
}
function pie(cx, cy, r, q, set, radii, rays) {
  const c = sets[set];
  const step = 2 * Math.PI / c.length;
  const start = set === 'mix' || set === 'blue' || set === 'grey' ? -.3 : 0;
  return c.map((f, i) => {
    const a = start + i * step, m = a + step / 2;
    const ray = rays ? `<path stroke="${f}" d="M${cx} ${cy}L${cx + (r + 4) * Math.sin(m)} ${cy - (r + 4) * Math.cos(m)}"/>` : '';
    return ray + `<path fill="${f}" d="${slice(cx, cy, radii ? r * radii[i % radii.length] : r, q, a, a + step)}"/>`;
  }).join('');
}
function legend(side, n) {
  let s = '';
  for (let i = 0; i < n; i++) {
    const c = wheel[i % 12];
    if (side === 'r') s += `<rect x="24" y="${i * 2}" width="2" height="2" fill="${c}"/><rect x="27" y="${i * 2}" width="3" height="1.500" fill="#777"/>`;
    else s += `<rect x="${1 + i * 28 / n}" y="${side === 't' ? 0 : 24}" width="2" height="2" fill="${c}"/><rect x="${3 + i * 28 / n}" y="${side === 't' ? 1 : 25}" width="2" height="1" fill="#555"/>`;
  }
  return s;
}
const rose = [.45, 1, .9, .8, .5];
const items = [
  ['파이 차...', pie(12, 14, 12, 0, 'mix') + legend('r', 4)],
  ['그라데...', pie(12, 14, 12, 0, 'grey') + legend('r', 4)],
  ['파이 차...', pie(16, 16, 10, 0, 'mix') + legend('t', 4)],
  ['파이 차...', pie(15, 12, 10, 0, 'mix') + legend('b', 4)],
  ['백분율 ...', pie(12, 14, 12, 0, 'blue') + legend('r', 4)],
  ['백분율 ...', pie(12, 14, 11, 0, 'blue') + legend('r', 4)],
  ['도넛형 ...', pie(12, 14, 12, 6, 'ring') + legend('r', 4)],
  ['백분율 ...', pie(15, 11, 11, 6, 'rose') + legend('b', 4)],
  ['백분율 ...', pie(15, 16, 11, 5, 'ring') + legend('t', 4)],
  ['백분율 ...', pie(15, 12, 11, 6, 'gold') + legend('b', 4)],
  ['백분율 ...', pie(15, 12, 11, 2, 'part') + legend('b', 4)],
  ['백분율 ...', pie(12, 14, 12, 3, 'pale') + legend('r', 12)],
  ['도넛형 ...', pie(12, 14, 12, 2, 'wheel') + legend('r', 9)],
  ['도넛형 ...', pie(12, 14, 12, 2, 'wheel2') + legend('r', 9)],
  ['도넛형 ...', pie(12, 14, 12, 7, 'ring') + legend('r', 4)],
  ['도넛형 ...', pie(15, 15, 10, 5, 'ring') + legend('t', 4)],
  ['장미 차...', pie(15, 13, 10, 0, 'rays', [.9, 1, .9, 1.1], 1) + legend('b', 8)],
  ['장미 차...', pie(14, 13, 10, 0, 'rays2', [.8, 1, .9, .7, 1.1], 1) + legend('b', 8)],
  ['그라데...', pie(12, 13, 11, 0, 'pale', [1.1, .6, .5, .5]) + legend('r', 12)],
  ['그라데...', pie(14, 14, 12, 0, 'fade', rose) + legend('r', 12)],
  ['그라데...', pie(12, 14, 12, 0, 'fade', rose) + legend('r', 12)],
  ['장미 차...', pie(12, 14, 12, 0, 'mix', [.8, 1, 1, .9, .8]) + legend('r', 4)],
  ['그라데...', pie(14, 10, 9, 0, 'pale', [.7, .9, .6, .7]) + legend('b', 8)]
];
el('thumbs').innerHTML = items.map(([t, s]) => `<figure><svg viewBox="0 0 30 28">${s}</svg><figcaption>${t}</figcaption></figure>`).join('');
```
